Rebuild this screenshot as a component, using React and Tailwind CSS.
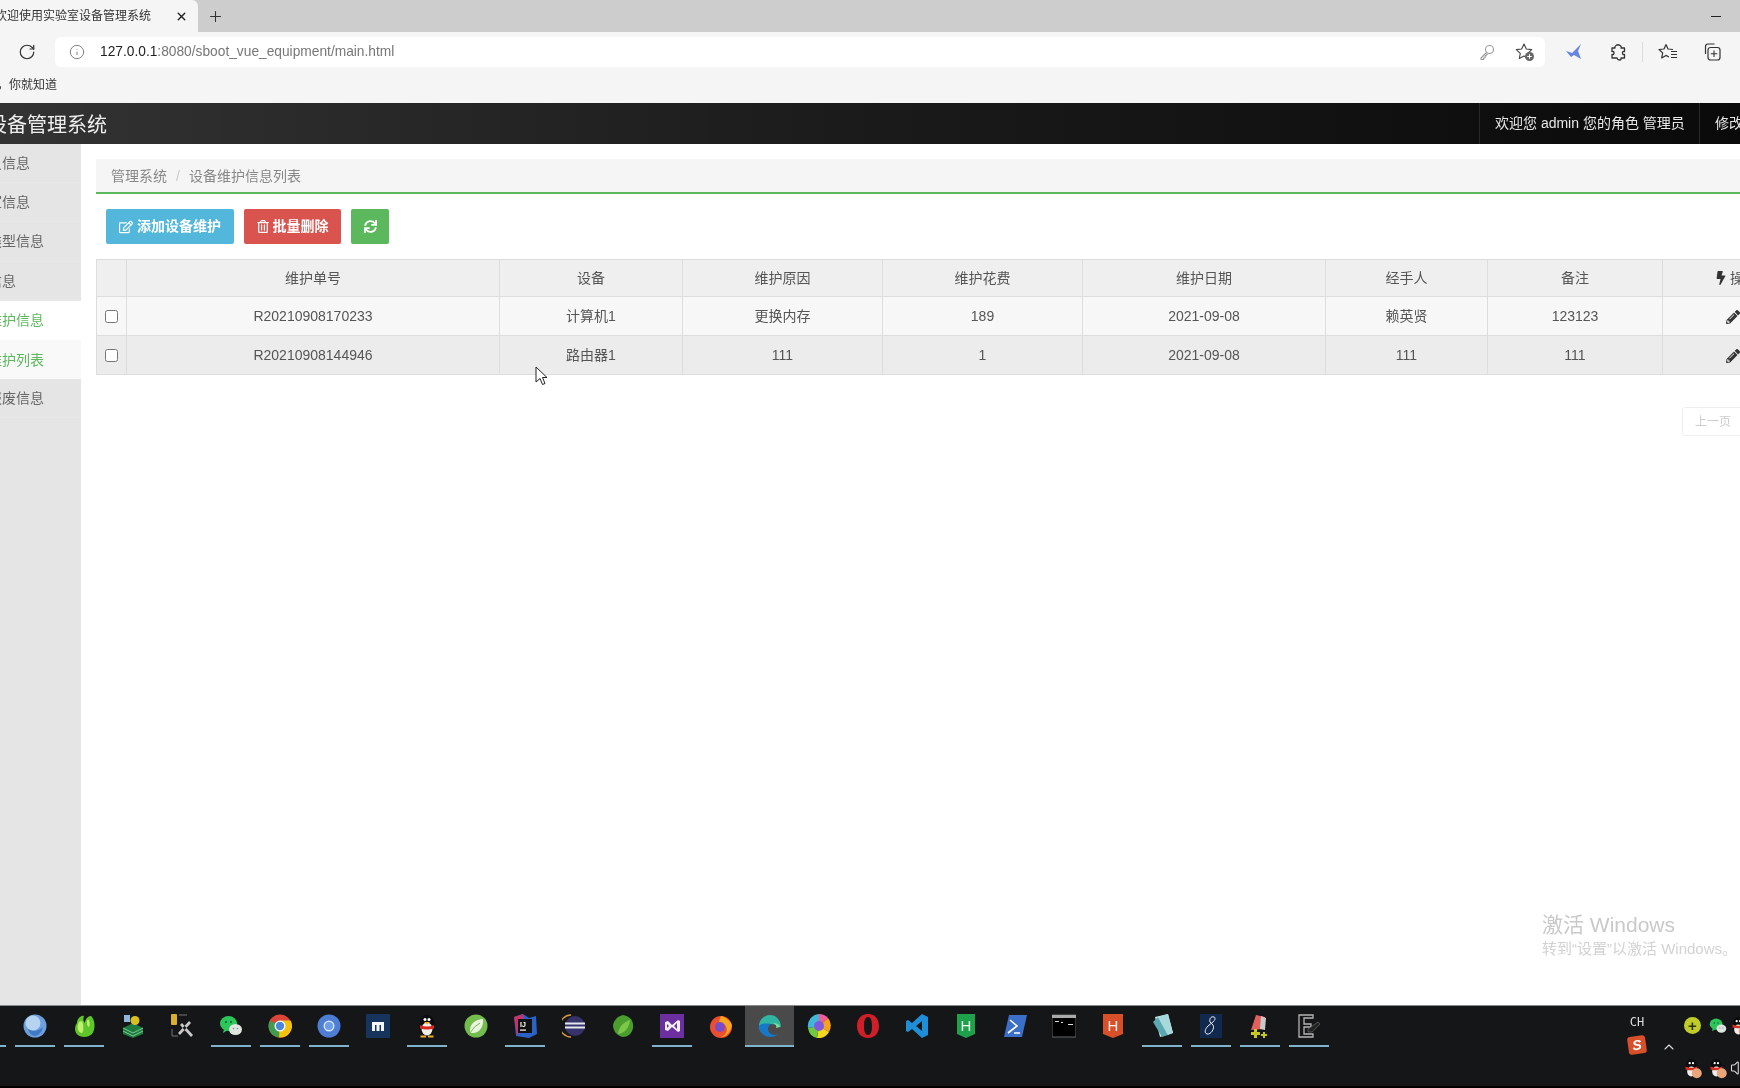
import { FaRegEdit, FaRegTrashAlt, FaSync, FaBolt, FaPencilAlt, FaTrashAlt } from 'react-icons/fa';
import { RotateCw, Info, Plus, X, ChevronUp, Volume1 } from 'lucide-react';

const sideItems = [
  { label: '员信息' },
  { label: '室信息' },
  { label: '类型信息' },
  { label: '信息' },
  { label: '维护信息', state: 'active' },
  { label: '维护列表', state: 'sub' },
  { label: '报废信息' },
];

const rows = [
  ['R20210908170233', '计算机1', '更换内存', '189', '2021-09-08', '赖英贤', '123123'],
  ['R20210908144946', '路由器1', '111', '1', '2021-09-08', '111', '111'],
];

const headers = ['维护单号', '设备', '维护原因', '维护花费', '维护日期', '经手人', '备注'];

const Svg = ({ children, className = 'w-6 h-6' }) => (
  <svg viewBox="0 0 24 24" className={className}>
    {children}
  </svg>
);

const Penguin = ({ className }) => (
  <Svg className={className}>
    <ellipse cx="12" cy="11" rx="7.5" ry="10.5" fill="#0c0c0c" />
    <ellipse cx="12" cy="15" rx="5.5" ry="6.5" fill="#f2efe6" />
    <circle cx="10" cy="5.5" r="1.5" fill="#fff" />
    <circle cx="14" cy="5.5" r="1.5" fill="#fff" />
    <path d="M9 8h6l-3 2.5z" fill="#f0b020" />
    <path d="M5 11q7 3 14 0v3.5q-7 2-14 0z" fill="#d8281f" />
    <path d="M5.5 21.5h5.5v2H5.5zM13 21.5h5.5v2H13z" fill="#f0b020" />
  </Svg>
);

const TrayPenguin = () => (
  <Svg className="w-[20px] h-[20px] shrink-0">
    <ellipse cx="10" cy="10" rx="7" ry="10" fill="#0c0c0c" />
    <ellipse cx="10" cy="15" rx="5" ry="6" fill="#eee" />
    <circle cx="8" cy="5" r="1.3" fill="#fff" />
    <circle cx="12" cy="5" r="1.3" fill="#fff" />
    <path d="M3 9q7 3 14 0v3.5q-7 2-14 0z" fill="#d8301f" />
    <circle cx="16.5" cy="17" r="6" fill="#e8a67a" />
  </Svg>
);

const WeChat = ({ className }) => (
  <Svg className={className}>
    <ellipse cx="9.5" cy="9.5" rx="8.5" ry="7.5" fill="#2dc65a" />
    <path d="M5 15l-1 4 5-3z" fill="#2dc65a" />
    <ellipse cx="16.5" cy="15.5" rx="6.5" ry="5.5" fill="#dfe5df" />
    <circle cx="7" cy="8" r="1" fill="#0f5f2a" />
    <circle cx="12" cy="8" r="1" fill="#0f5f2a" />
    <circle cx="14.5" cy="14.5" r=".8" fill="#888" />
    <circle cx="18.5" cy="14.5" r=".8" fill="#888" />
  </Svg>
);

const taskIcons = [
  { line: true, icon: null },
  {
    line: true,
    icon: (
      <Svg>
        <circle cx="12" cy="12" r="11.5" fill="#6d9fdc" />
        <circle cx="10" cy="9" r="7.5" fill="#b6d3f2" />
        <path d="M5 15q7 5 15-2-2 8-8 9-5 0-7-7z" fill="#3f78c4" />
      </Svg>
    ),
  },
  {
    line: true,
    icon: (
      <Svg>
        <path d="M12 23C3 23 1 14 5 9c0-4 4-8 7-7-1 3-1 5 1 7 0-4 3-7 6-7 4 3 5 13 1 18-2 2-5 3-8 3z" fill="#5fc52a" />
        <path d="M7 8c-2 4-2 9 2 11 3 1 3-8 1-12zM16 5c2 2 2 6 1 8-2-1-3-5-1-8z" fill="#c0f070" />
      </Svg>
    ),
  },
  {
    icon: (
      <Svg>
        <path d="M2 14l10-5 10 5v6l-10 4-10-4z" fill="#1f7a3f" />
        <path d="M2 14l10 5 10-5M2 17l10 5 10-5" stroke="#8fe0a0" strokeWidth="0.8" fill="none" />
        <circle cx="14" cy="6.5" r="4.5" fill="#d8c020" />
        <rect x="3" y="1" width="6" height="7" fill="#8fb6dd" />
      </Svg>
    ),
  },
  {
    icon: (
      <Svg>
        <rect x="1" y="0" width="6" height="11" rx="1" fill="#d8b030" />
        <path d="M9 1h8M2 15v7h6" stroke="#777" fill="none" />
        <path d="M10 11l11 12 2-2L12 9zM21 9L10 21l-2-2L19 7z" fill="#c9c9c9" />
      </Svg>
    ),
  },
  { line: true, icon: <WeChat /> },
  {
    line: true,
    icon: (
      <Svg>
        <circle cx="12" cy="12" r="11.5" fill="#db4437" />
        <path d="M12 12L2 6.5A11.5 11.5 0 0 0 11 23.5z" fill="#3f9d4e" />
        <path d="M12 6.5h10.5A11.5 11.5 0 0 1 11 23.5z" fill="#f4c20d" />
        <circle cx="12" cy="12" r="5.5" fill="#fff" />
        <circle cx="12" cy="12" r="4.2" fill="#4a86e0" />
      </Svg>
    ),
  },
  {
    line: true,
    icon: (
      <Svg>
        <circle cx="12" cy="12" r="11.5" fill="#4d7ed4" />
        <circle cx="12" cy="12" r="5.5" fill="#d6e4fa" />
        <circle cx="12" cy="12" r="4" fill="#6d9ce8" />
      </Svg>
    ),
  },
  {
    icon: (
      <Svg>
        <rect width="24" height="24" rx="1" fill="#17345c" />
        <path d="M6 8h12v9h-3v-6h-1.5v6h-3v-6H9v6H6z" fill="#f4f6f8" />
      </Svg>
    ),
  },
  { line: true, icon: <Penguin /> },
  {
    icon: (
      <Svg>
        <circle cx="12" cy="12" r="11.5" fill="#72bd4b" />
        <path d="M6 18C5 10 12 5 19 5c1 8-4 14-10 14-1 0-2 0-3-1z" fill="#e9f3df" />
        <path d="M6 19q4-7 10-10" stroke="#72bd4b" fill="none" />
      </Svg>
    ),
  },
  {
    line: true,
    icon: (
      <Svg>
        <path d="M1 3l9-3 6 4 7-2 1 18-8 4-13-2z" fill="#2a62c8" />
        <path d="M1 3l9-3 2 14-8 7z" fill="#c8326a" />
        <rect x="5" y="5" width="14" height="14" fill="#111" />
        <text x="7" y="13" fontSize="7" fontWeight="700" fill="#fff" fontFamily="Liberation Sans">IJ</text>
        <rect x="7" y="15.5" width="6" height="1.2" fill="#fff" />
      </Svg>
    ),
  },
  {
    icon: (
      <Svg>
        <path d="M9 1a11 11 0 0 0 0 22" stroke="#d89a3a" strokeWidth="1.4" fill="none" />
        <circle cx="13" cy="12" r="10" fill="#37326a" />
        <path d="M3 8.5h20v2H3zM3 12.5h20v2H3z" fill="#e6e6f0" />
      </Svg>
    ),
  },
  {
    icon: (
      <Svg>
        <path d="M12 1c7 1 11 6 10 13-1 6-6 9-10 9-6-1-10-6-10-12C3 6 7 2 12 1z" fill="#4b9e2e" />
        <path d="M7 20c1-8 6-12 12-14-1 8-5 13-12 14z" fill="#7cc74a" />
      </Svg>
    ),
  },
  {
    line: true,
    icon: (
      <Svg>
        <rect width="24" height="24" fill="#6b2fa0" />
        <path d="M5 8l3-1 4 4 6-5 2 1v10l-2 1-6-5-4 4-3-1zM7 10v4l2-2zM17 9l-3 3 3 3z" fill="#f2eef8" />
      </Svg>
    ),
  },
  {
    icon: (
      <Svg>
        <circle cx="12" cy="13" r="11" fill="#ec4f2f" />
        <path d="M12 2c4 1 9 4 11 9-1 6-5 12-11 12 6-2 8-9 3-13-3 0-6 1-6 3 0-5 2-8 3-11z" fill="#f9a61f" />
        <circle cx="11" cy="13" r="5" fill="#7b4cc8" />
      </Svg>
    ),
  },
  {
    active: true,
    line: true,
    icon: (
      <Svg>
        <path d="M23 13C23 6 18 1 12 1 6 1 1 6 1 12c0 3 1 5 2 6 0-5 4-8 9-8 5 0 8 2 11 3z" fill="#2fb5a0" />
        <path d="M1 12c0 6 5 11 11 11 3 0 6-1 8-3-4 2-10 0-10-5 0-2 1-4 3-5-7-1-11 0-12 2z" fill="#1578c8" />
        <path d="M22 13c0-2-3-4-7-4 3 1 4 3 3 5z" fill="#7be0a0" />
      </Svg>
    ),
  },
  {
    icon: (
      <Svg>
        <path d="M12 0a12 12 0 0 1 9 4l-9 8z" fill="#f25c9a" />
        <path d="M21 4a12 12 0 0 1 1 14l-10-6z" fill="#f6a21e" />
        <path d="M22 18a12 12 0 0 1-12 6l2-12z" fill="#f3d81f" />
        <path d="M10 24A12 12 0 0 1 1 14l11-2z" fill="#6fc83f" />
        <path d="M1 14A12 12 0 0 1 12 0v12z" fill="#3fb8d8" />
        <circle cx="12" cy="12" r="5" fill="#7e5ae0" />
      </Svg>
    ),
  },
  {
    icon: (
      <Svg>
        <path fillRule="evenodd" d="M12 0c7 0 11 5 11 12s-4 12-11 12S1 19 1 12 5 0 12 0zm0 3c-3 0-4 4-4 9s1 9 4 9 4-4 4-9-1-9-4-9z" fill="#d01f28" />
      </Svg>
    ),
  },
  {
    icon: (
      <Svg>
        <path d="M17 0l6 3v18l-6 3-10-9-4 3-2-1V7l2-1 4 3zm0 7l-6 5 6 5z" fill="#1f8ed8" />
      </Svg>
    ),
  },
  {
    icon: (
      <Svg>
        <path d="M3 0h18v20l-9 4-9-4z" fill="#1fa04a" />
        <text x="12" y="17" textAnchor="middle" fontSize="15" fill="#e8f8ea" fontFamily="Liberation Sans">H</text>
      </Svg>
    ),
  },
  {
    icon: (
      <Svg>
        <path d="M6 1h18l-5 22H1z" fill="#3b6fc8" />
        <path d="M7 6l7 6-9 7M11 19h6" stroke="#fff" strokeWidth="1.6" fill="none" />
      </Svg>
    ),
  },
  {
    icon: (
      <Svg>
        <rect y="1" width="24" height="22" fill="#000" stroke="#666" />
        <rect y="1" width="24" height="3" fill="#aaa" />
        <path d="M3 7h4v1H3zM9 8h2v1H9zM16 10h5v1h-5z" fill="#ddd" />
      </Svg>
    ),
  },
  {
    icon: (
      <Svg>
        <path d="M2 0h20v20l-10 4-10-4z" fill="#d8502a" />
        <text x="12" y="17" textAnchor="middle" fontSize="15" fill="#fbeee6" fontFamily="Liberation Sans">H</text>
      </Svg>
    ),
  },
  {
    line: true,
    icon: (
      <Svg>
        <path d="M5 3l13-3 5 19-13 4z" fill="#c9e8ea" />
        <path d="M3 8l5-5 10 18-6 2z" fill="#5aa8b0" />
        <path d="M8 3l10-3 5 19-5 2z" fill="#a7d8dc" />
      </Svg>
    ),
  },
  {
    line: true,
    icon: (
      <Svg>
        <rect x="1" width="22" height="24" fill="#12294f" />
        <path d="M15 3c-3-1-5 2-4 5l3 3c2 3-2 10-6 9-3-1-2-5 1-8l5-4c2-2 3-4 1-5z" stroke="#e8eef8" strokeWidth="1" fill="none" />
      </Svg>
    ),
  },
  {
    line: true,
    icon: (
      <Svg>
        <path d="M8 1l9 2-2 12-12 1z" fill="#e0605a" />
        <path d="M13 2l5 2-1 12-5-1z" fill="#c9c9c9" />
        <path d="M6 15h3v3h3v3H9v3H6v-3H3v-3h3zM15 18h2v2h2v2h-2v2h-2v-2h-2v-2h2z" fill="#c8c820" />
      </Svg>
    ),
  },
  {
    line: true,
    icon: (
      <Svg>
        <path d="M2 1h14v3H7v6h7v3H7v7h9v3H2z" fill="none" stroke="#b5b5b5" strokeWidth="1.3" />
        <path d="M11 15l10-7 2 2-8 8h-4z" fill="#222" stroke="#777" strokeWidth=".6" />
      </Svg>
    ),
  },
];

const App = () => {
  return (
    <div className="relative flex flex-col w-[1740px] h-[1088px] overflow-hidden bg-white blur-[0.35px] font-['Liberation_Sans','Noto_Sans_CJK_SC',sans-serif]">
      {/* Browser chrome */}
      <div className="h-[103px] shrink-0 bg-[#f5f5f5]">
        <div className="flex items-center h-[32px] bg-[#cdcdcd] pr-[19px]">
          <div className="flex items-center w-[198px] h-full bg-[#f5f5f5] rounded-tr-md">
            <span className="-ml-[5px] text-[12px] text-[#333] whitespace-nowrap">欢迎使用实验室设备管理系统</span>
            <X className="ml-[24px] w-[13px] h-[13px] text-[#222]" strokeWidth={2.5} />
          </div>
          <Plus className="ml-[9px] w-[17px] h-[17px] text-[#333]" strokeWidth={1.5} />
          <div className="ml-auto w-[10px] h-px bg-[#222]"></div>
        </div>
        <div className="flex items-center h-[34px] mt-[3px]">
          <RotateCw className="ml-[18px] w-[18px] h-[18px] text-[#333]" strokeWidth={1.6} />
          <div className="ml-[19px] flex items-center w-[1490px] h-[30px] bg-white rounded-md">
            <Info className="ml-[14px] w-[16px] h-[16px] text-[#777]" strokeWidth={1.4} />
            <span className="ml-[15px] text-[13.75px] text-[#777]">
              <span className="text-[#222]">127.0.0.1</span>:8080/sboot_vue_equipment/main.html
            </span>
            {/* password key */}
            <svg viewBox="0 0 16 16" className="ml-auto w-[16px] h-[16px]">
              <circle cx="10.5" cy="5.5" r="4" fill="none" stroke="#999" strokeWidth="1.1" />
              <path d="M7.5 8.5L2 14v1.5h2.5V14H6v-1.5l2.5-2.5" fill="none" stroke="#999" strokeWidth="1.1" strokeLinejoin="round" />
            </svg>
            {/* add to favourites */}
            <svg viewBox="0 0 20 20" className="ml-[20px] mr-[10px] w-[20px] h-[20px]">
              <path d="M9 2l2.3 5 5.4.6-4 3.7 1 5.2L9 14l-4.7 2.5 1-5.2-4-3.7 5.4-.6z" fill="none" stroke="#444" strokeWidth="1.1" strokeLinejoin="round" />
              <circle cx="14.5" cy="14.5" r="4.5" fill="#666" />
              <path d="M14.5 12.2v4.6M12.2 14.5h4.6" stroke="#fff" strokeWidth="1" />
            </svg>
          </div>
          {/* extension bird */}
          <svg viewBox="0 0 18 18" className="ml-[20px] w-[18px] h-[18px]">
            <path d="M1 8l6 2L16 1l-3 7 3 8-7-4-3 2z" fill="#6585e2" />
          </svg>
          {/* extensions */}
          <svg viewBox="0 0 18 18" className="ml-[26px] w-[18px] h-[18px]">
            <path d="M7 2.5q2-1.5 4 0t1 2.5h3.5v3.5q-2-.5-2 1.5t2 1.5V15h-3.5q.5 2-1.5 2T8 15H3v-3.5q2 .5 2-1.5T3 8.5V5h3q-.5-1.5 1-2.5z" fill="none" stroke="#333" strokeWidth="1.3" strokeLinejoin="round" />
          </svg>
          <div className="ml-[15px] w-px h-[20px] bg-[#ddd]"></div>
          {/* favourites */}
          <svg viewBox="0 0 20 20" className="ml-[15px] w-[20px] h-[20px]">
            <path d="M8 2.5l2 4.5 5 .5M8 2.5L6 7l-5 .5 3.7 3.4-1 5L8 13.4l3 1.6" fill="none" stroke="#333" strokeWidth="1.2" strokeLinejoin="round" />
            <path d="M13 9.5h6M13 12.5h6M13 15.5h6" stroke="#333" strokeWidth="1.1" />
          </svg>
          {/* collections */}
          <svg viewBox="0 0 20 20" className="ml-[24px] w-[20px] h-[20px]">
            <path d="M3.5 12V4.5q0-2.5 2.5-2.5h6.5" fill="none" stroke="#333" strokeWidth="1.2" />
            <rect x="6" y="5.5" width="12" height="12.5" rx="2.5" fill="none" stroke="#333" strokeWidth="1.2" />
            <path d="M12 8.5v6.5M8.7 11.7h6.6" stroke="#333" strokeWidth="1.1" />
          </svg>
        </div>
        <div className="-ml-[3px] mt-[6px] text-[12px] leading-[20px] text-[#333]">，你就知道</div>
      </div>

      {/* App header */}
      <div className="flex items-stretch h-[41px] shrink-0 bg-gradient-to-r from-[#333333] via-[#1a1a1a] to-[#0a0a0a] text-white">
        <div className="-ml-[13px] pt-[2px] text-[20px] leading-[41px] text-[#eee] whitespace-nowrap">设备管理系统</div>
        <div className="ml-auto flex items-center w-[220px] px-[15px] border-l border-[#2a2a2a] text-[14px] text-[#e8e8e8] whitespace-nowrap">
          欢迎您 admin 您的角色 管理员
        </div>
        <div className="flex items-center w-[41px] pl-[15px] border-l border-[#2a2a2a] text-[14px] text-[#e8e8e8] whitespace-nowrap overflow-hidden">
          修改密码
        </div>
      </div>

      <div className="flex flex-1 min-h-0">
        {/* Side menu */}
        <div className="w-[81px] shrink-0 bg-[#e5e5e5] overflow-hidden">
          {sideItems.map((item) => (
            <div
              key={item.label}
              className={
                item.state === 'active'
                  ? 'h-[39.2px] leading-[39px] bg-white text-[#5cb85c] text-[14px] whitespace-nowrap'
                  : item.state === 'sub'
                    ? 'h-[39.2px] leading-[41px] bg-[#f9f9f9] text-[#5cb85c] text-[14px] whitespace-nowrap'
                    : 'h-[39.2px] leading-[39px] border-b border-[#e9e9e9] text-[#666] text-[14px] whitespace-nowrap'
              }
            >
              <span className="-ml-[12px] inline-block">{item.label}</span>
            </div>
          ))}
        </div>

        {/* Content */}
        <div className="flex-1 min-w-0 pl-[15px] pt-[15px] overflow-hidden">
          <div className="flex items-center gap-[9px] h-[35px] pl-[15px] pt-[2px] bg-[#f5f5f5] border-b-2 border-[#5cb85c] text-[14px] text-[#888]">
            <span>管理系统</span>
            <span className="text-[#ccc]">/</span>
            <span>设备维护信息列表</span>
          </div>

          {/* Toolbar */}
          <div className="flex gap-[10px] mt-[15px] ml-[10px]">
            <button className="flex items-center gap-[4px] justify-center w-[128px] h-[35px] rounded-[2px] bg-[#52b7da] text-white text-[14px] font-bold">
              <FaRegEdit className="w-[14px] h-[14px]" />
              添加设备维护
            </button>
            <button className="flex items-center gap-[4px] justify-center w-[97px] h-[35px] rounded-[2px] bg-[#d9534f] text-white text-[14px] font-bold">
              <FaRegTrashAlt className="w-[12px] h-[13px]" />
              批量删除
            </button>
            <button className="flex items-center justify-center w-[38px] h-[35px] rounded-[2px] bg-[#5cb85c] text-white">
              <FaSync className="w-[13px] h-[13px]" />
            </button>
          </div>

          {/* Table */}
          <table className="mt-[15px] table-fixed w-[1729px] border-collapse text-[14px] text-[#555] text-center">
            <colgroup>
              <col className="w-[30px]" />
              <col className="w-[373px]" />
              <col className="w-[183px]" />
              <col className="w-[200px]" />
              <col className="w-[200px]" />
              <col className="w-[243px]" />
              <col className="w-[162px]" />
              <col className="w-[175px]" />
              <col className="w-[163px]" />
            </colgroup>
            <thead>
              <tr className="h-[37px] bg-[#efefef]">
                <th className="border border-[#dddddd] font-normal"></th>
                {headers.map((h) => (
                  <th key={h} className="border border-[#dddddd] font-normal">{h}</th>
                ))}
                <th className="border border-[#dddddd] font-normal whitespace-nowrap pr-[14px]">
                  <FaBolt className="inline-block w-[10px] h-[14px] mr-[4px] -mt-[2px] text-[#333]" />
                  操作
                </th>
              </tr>
            </thead>
            <tbody>
              {rows.map((row, i) => (
                <tr key={row[0]} className={i === 0 ? 'h-[39px] bg-[#f7f7f7]' : 'h-[39px] bg-[#ececec]'}>
                  <td className="border border-[#dddddd]">
                    <input type="checkbox" className="block mx-auto w-[13px] h-[13px]" />
                  </td>
                  {row.map((cell, j) => (
                    <td key={j} className="border border-[#dddddd]">{cell}</td>
                  ))}
                  <td className="border border-[#dddddd] text-[#333]">
                    <FaPencilAlt className="inline-block w-[14px] h-[14px] mr-[8px]" />
                    <FaTrashAlt className="inline-block w-[14px] h-[14px]" />
                  </td>
                </tr>
              ))}
            </tbody>
          </table>

          {/* Pagination */}
          <div className="mt-[32px] ml-[1586px] flex">
            <div className="flex items-center justify-center w-[80px] h-[29px] border border-[#eeeeee] rounded-[3px] text-[12px] text-[#cccccc] shrink-0 pr-[18px]">
              上一页
            </div>
          </div>
        </div>
      </div>

      {/* Taskbar */}
      <div className="flex h-[83px] shrink-0 bg-[#141617] border-t border-[#8a8a8a] border-b-2 border-b-black">
        <div className="flex -ml-[39px] shrink-0">
          {taskIcons.map((t, i) => (
            <div
              key={i}
              className={
                t.active
                  ? 'relative flex justify-center w-[49px] h-[41px] pt-[8px] bg-[#4a4a4a]'
                  : 'relative flex justify-center w-[49px] h-[41px] pt-[8px]'
              }
            >
              {t.icon}
              {t.line && (
                <span
                  className={
                    t.active
                      ? 'absolute left-0 right-0 bottom-0 h-[2px] bg-[#7fb3cc]'
                      : 'absolute left-[5px] right-[4px] bottom-0 h-[2px] bg-[#7fb3cc]'
                  }
                ></span>
              )}
            </div>
          ))}
        </div>

        {/* Tray */}
        <div className="ml-auto flex w-[117px] shrink-0 overflow-hidden">
          <div className="flex flex-col items-center w-[28px] shrink-0 pt-[7px]">
            <span className="text-[12px] leading-[18px] text-[#ddd] font-['DejaVu_Sans_Mono',monospace]">CH</span>
            <span className="mt-[5px] flex items-center justify-center w-[18px] h-[18px] rounded-[3px] bg-[#d8502a] text-white text-[14px] font-bold italic rotate-[-8deg]">S</span>
          </div>
          <div className="w-[29px] shrink-0 pl-[9px] pt-[33px]">
            <ChevronUp className="w-[18px] h-[16px] text-[#ddd]" strokeWidth={1.6} />
          </div>
          <div className="grid grid-cols-[25px_25px_20px] grid-rows-[18px_18px] gap-y-[24px] w-[70px] shrink-0 pt-[11px]">
            <div className="flex justify-center">
              <span className="flex items-center justify-center w-[17px] h-[17px] rounded-full bg-[#c2cc28] text-[#2a3a10] text-[15px] leading-none font-bold">+</span>
            </div>
            <div className="flex justify-center">
              <WeChat className="w-[18px] h-[18px] shrink-0" />
            </div>
            <div className="flex justify-center">
              <TrayPenguin />
            </div>
            <div className="flex justify-center">
              <TrayPenguin />
            </div>
            <div className="flex justify-center">
              <TrayPenguin />
            </div>
            <div className="flex justify-start">
              <Volume1 className="w-[18px] h-[18px] text-[#ddd] shrink-0" strokeWidth={1.4} />
            </div>
          </div>
        </div>
      </div>

      {/* Windows activation watermark */}
      <div className="absolute left-[1542px] top-[911px] text-[#c9c9c9] whitespace-nowrap pointer-events-none">
        <div className="text-[21px] leading-[28px]">激活 Windows</div>
        <div className="text-[15px] leading-[20px] text-[#d2d2d2]">转到“设置”以激活 Windows。</div>
      </div>

      {/* Mouse pointer */}
      <svg viewBox="0 0 14 20" className="absolute left-[535px] top-[366px] w-[14px] h-[20px]">
        <path d="M1 1v15l4-3.5 2.5 6 2.5-1-2.5-6H12z" fill="#fff" stroke="#222" strokeWidth="1" />
      </svg>
    </div>
  );
};

export default App;
